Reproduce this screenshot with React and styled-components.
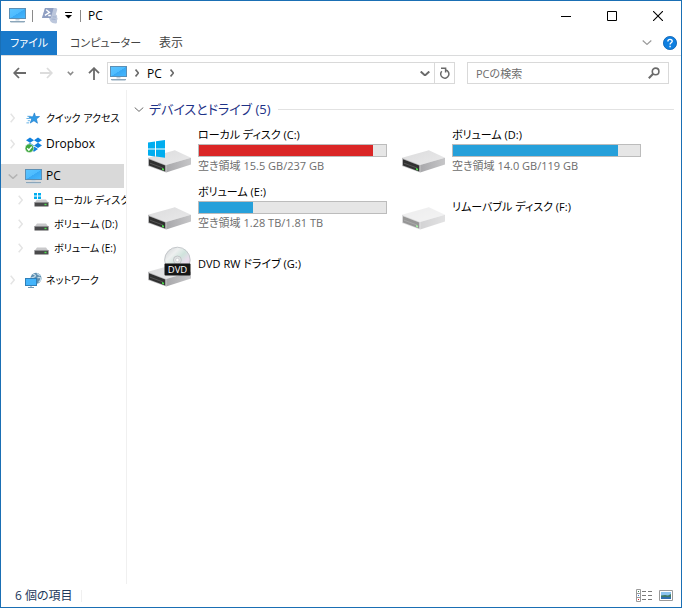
import React from "react";
import styled, { createGlobalStyle, css } from "styled-components";

const GlobalStyle = createGlobalStyle`
  * { box-sizing: border-box; }
  body { margin: 0; background: #fff; }
  body, button, input {
    font-family: "Open Sans", "Noto Sans CJK JP", sans-serif;
    font-size: 12px;
    font-feature-settings: "palt";
  }
  button { border: 0; padding: 0; background: none; color: inherit; }
  svg { display: block; flex: none; }
`;

const Window = styled.div`
  display: flex;
  flex-direction: column;
  height: 100vh;
  min-height: 320px;
  border: 1px solid #1a6fb4;
  background: #fff;
  color: #000;
`;

const TitleBar = styled.header`
  display: flex;
  align-items: center;
  flex: none;
  height: 29px;
  padding-left: 8px;
`;

const Separator = styled.span`
  flex: none;
  width: 1px;
  height: 12px;
  margin: 0 ${(p) => p.$after}px 0 ${(p) => p.$before}px;
  background: #8a8a8a;
`;

const Title = styled.h1`
  flex: 1;
  margin: 0;
  font-size: 12px;
  font-weight: 400;
  line-height: 16px;
`;

const CaptionButton = styled.button`
  display: flex;
  align-items: center;
  justify-content: center;
  width: 46px;
  height: 28px;
`;

const QuickButton = styled.button`
  display: flex;
  align-items: center;
  justify-content: center;
  width: ${(p) => p.$width || 16}px;
  height: 20px;
`;

const Ribbon = styled.nav`
  display: flex;
  align-items: center;
  flex: none;
  height: 26px;
  padding-right: 4px;
  border-bottom: 1px solid #dadbdc;
`;

const RibbonTab = styled.button`
  height: 24px;
  padding: 0 9px;
  font-size: ${(p) => (p.$kana ? 11 : 12)}px;
  line-height: 24px;
  color: #444;
  white-space: nowrap;
  ${(p) => p.$primary && css`
    width: 56px;
    margin-right: 4px;
    background: #1979ca;
    color: #fff;
  `}
`;

const RibbonTools = styled.div`
  display: flex;
  align-items: center;
  gap: 11px;
  margin-left: auto;
`;

const ToolBar = styled.div`
  display: flex;
  align-items: center;
  flex: none;
  height: 34px;
  padding: 0 12px;
`;

const NavButtons = styled.div`
  display: flex;
  align-items: center;
  gap: 14px;
  margin-right: 7px;
`;

const AddressBox = styled.div`
  display: flex;
  align-items: center;
  flex: 1 1 348px;
  height: 22px;
  padding-left: 2px;
  border: 1px solid #d9d9d9;
`;

const CrumbArrow = styled.button`
  margin: 0 8px;
`;

const Crumb = styled.span`
  margin-right: 8px;
`;

const AddressEnd = styled.div`
  display: flex;
  align-items: center;
  align-self: stretch;
  margin-left: auto;
`;

const RefreshButton = styled.button`
  display: flex;
  align-items: center;
  justify-content: center;
  align-self: stretch;
  width: 20px;
  margin-left: 4px;
  border-left: 1px solid #d9d9d9;
`;

const SearchBox = styled.label`
  display: flex;
  align-items: center;
  flex: 0 1 202px;
  min-width: 80px;
  height: 22px;
  margin-left: 12px;
  padding: 0 8px;
  border: 1px solid #d9d9d9;
`;

const SearchInput = styled.input`
  flex: 1;
  min-width: 0;
  padding: 0;
  border: 0;
  outline: 0;
  background: transparent;
  font-size: 11px;
  &::placeholder { color: #6d6d6d; opacity: 1; }
`;

const Body = styled.div`
  display: flex;
  flex: 1;
  min-height: 0;
`;

const SideBar = styled.nav`
  flex: none;
  width: 126px;
  padding: 16px 2px 0 0;
  border-right: 1px solid #f0f0f0;
  overflow: hidden;
`;

const TreeGroup = styled.ul`
  margin: 0 0 ${(p) => p.$gap}px;
  padding: 0;
  list-style: none;
`;

const TreeItem = styled.li`
  display: flex;
  align-items: center;
  height: 24px;
  padding-left: ${(p) => (p.$nested ? 17 : 9)}px;
  background: ${(p) => (p.$selected ? "#d9d9d9" : "transparent")};
`;

const TreeArrow = styled.span`
  display: flex;
  justify-content: center;
  flex: none;
  width: 5px;
`;

const TreeIcon = styled.span`
  display: flex;
  justify-content: center;
  flex: none;
  width: 18px;
  margin: 0 4px 0 9px;
`;

const TreeLabel = styled.a`
  color: #000;
  font-size: ${(p) => (p.$kana ? 10 : 12)}px;
  line-height: 18px;
  text-decoration: none;
  white-space: nowrap;
`;

const Content = styled.main`
  flex: 1;
  min-width: 0;
  padding: 8px 7px 0;
  overflow: hidden;
`;

const GroupHeader = styled.h2`
  display: flex;
  align-items: center;
  gap: 5px;
  margin: 0;
  font-size: 13px;
  font-weight: 400;
  line-height: 22px;
  color: #1e3287;
  white-space: nowrap;
  &::after {
    content: "";
    flex: 1;
    height: 1px;
    margin-left: 2px;
    background: #e2e2e2;
  }
`;

const DriveGrid = styled.ul`
  display: grid;
  grid-template-columns: repeat(auto-fill, 254px);
  grid-auto-rows: 57px;
  margin: 0;
  padding: 1px 0 0 14px;
  list-style: none;
`;

const DriveTile = styled.li`
  display: flex;
  align-items: center;
  gap: 7px;
`;

const DriveInfo = styled.div`
  display: flex;
  flex-direction: column;
  width: 189px;
`;

const DriveName = styled.span`
  font-size: 11px;
  line-height: 15px;
  white-space: nowrap;
`;

const Meter = styled.div`
  height: 13px;
  margin: 2px 0 1px;
  border: 1px solid #bcbcbc;
  background: #e6e6e6;
`;

const MeterFill = styled.div`
  height: 100%;
  background: ${(p) => (p.$full ? "#da2626" : "#26a0da")};
`;

const FreeSpace = styled.span`
  font-size: 11px;
  line-height: 15px;
  color: #6d6d6d;
  white-space: nowrap;
`;

const StatusBar = styled.footer`
  display: flex;
  align-items: center;
  flex: none;
  height: 23px;
  padding: 0 8px 0 14px;
  color: #1e395b;
`;

const StatusText = styled.span`
  padding-right: 8px;
  border-right: 1px solid #f0f0f0;
  line-height: 12px;
`;

const ViewButtons = styled.div`
  display: flex;
  align-items: center;
  gap: 7px;
  margin-left: auto;
`;

const ViewButton = styled.button`
  display: block;
`;

function Chevron({ dir = "right", color = "#6a6a6a", size = 5, stroke = 1.5 }) {
  const right = dir === "right";
  return (
    <svg width={right ? size : size * 2} height={right ? size * 2 : size} viewBox={right ? "0 0 5 10" : "0 0 10 5"} aria-hidden="true">
      <path d={right ? "M.7.7 4.3 5 .7 9.3" : "M.7.5 5 4.4 9.3.5"} fill="none" stroke={color} strokeWidth={stroke} />
    </svg>
  );
}

function PcIcon({ size = 17 }) {
  return (
    <svg width={size} height={size} viewBox="0 0 17 17" aria-hidden="true">
      <defs>
        <linearGradient id="screen" x1="0" y1="0" x2="1" y2="1">
          <stop offset="0" stopColor="#5cc4ff" />
          <stop offset=".5" stopColor="#4dbcff" />
          <stop offset=".52" stopColor="#38a9f4" />
          <stop offset="1" stopColor="#47b8ff" />
        </linearGradient>
      </defs>
      <rect x=".5" y="1.5" width="16" height="10" fill="url(#screen)" stroke="#5b8fb5" />
      <path d="M6.5 12h4v1.5h-4z" fill="#c5d3de" />
      <path d="M1 14.5h15" stroke="#8ba6ba" />
      <path d="M1.5 15.5h14" stroke="#c9d5de" />
    </svg>
  );
}

function ScriptIcon() {
  return (
    <svg width="16" height="17" viewBox="0 0 16 17" aria-hidden="true">
      <path d="M3 1h10.5c1.6 0 2 1 1.6 2.2l-1.3 4.3c1.4.6 1.6 1.6 1.2 2.8.8.8.7 2 0 2.8v1.8c0 1-.7 1.6-1.6 1.6-2 0-3.8-.8-5-2.2L6.9 11H0Z" fill="#bcc7dc" />
      <path d="M3 1h8.6L8.8 11H0Z" fill="#8f9fc2" />
      <path d="m4.2 2.8 3.3 2.6-4.6 3M6.2 8.5h2.6" fill="none" stroke="#fff" strokeWidth="1.3" />
      <path d="m9.5 12 4 .4M10.5 9.8l3.6.3" stroke="#9babca" strokeWidth=".8" />
    </svg>
  );
}

function WinLogo() {
  return (
    <path d="m0 2.4 7-1v7H0ZM8 1.2 17 0v8.4H8ZM0 9.4h7v7l-7-1ZM8 9.4h9v8.4l-9-1.2Z" fill="#00adef" />
  );
}

function DriveShape() {
  return (
    <g>
      <path d="M0 17.8 26 10.4c.6-.1 1-.1 1.4.1L43 17.8 18.4 25Z" fill="url(#top)" />
      <path d="M18.2 25 43 17.8v6.8L18.2 32.4Z" fill="url(#side)" />
      <path d="m0 17.8 18.2 7.2v7.4L0 26Z" fill="#b9b9bb" />
      <path d="m1 19.2 16.2 6.2v6L1 25.4Z" fill="#303030" />
      <path d="m2 23.2 13 4.8" stroke="#555" strokeWidth="1" />
      <path d="m14 28 2 .7v1.8l-2-.7Z" fill="#4be34b" />
    </g>
  );
}

function DriveIcon({ kind }) {
  return (
    <svg width="43" height="48" viewBox="0 -14 43 48" opacity={kind === "removable" ? 0.5 : 1} aria-hidden="true">
      <defs>
        <linearGradient id="top" x1="0" y1="0" x2="1" y2="1">
          <stop offset="0" stopColor="#dcdcdd" />
          <stop offset="1" stopColor="#e9e9ea" />
        </linearGradient>
        <linearGradient id="side" x1="0" y1="0" x2="1" y2="0">
          <stop offset="0" stopColor="#a8a8ab" />
          <stop offset="1" stopColor="#c6c6c8" />
        </linearGradient>
        <linearGradient id="disc" x1="0" y1="0" x2="1" y2="1">
          <stop offset="0" stopColor="#c9cdd0" />
          <stop offset=".3" stopColor="#eef0f0" />
          <stop offset=".5" stopColor="#cfe3dc" />
          <stop offset=".7" stopColor="#eadcec" />
          <stop offset="1" stopColor="#c5c9cc" />
        </linearGradient>
      </defs>
      <DriveShape />
      {kind === "system" && <WinLogo />}
      {kind === "dvd" && (
        <g>
          <circle cx="29.4" cy="6" r="12.8" fill="url(#disc)" stroke="#b9bdc0" strokeWidth=".8" />
          <circle cx="29.4" cy="6" r="4" fill="#dfe2e3" stroke="#b4b8ba" strokeWidth=".7" />
          <circle cx="29.4" cy="6" r="1.7" fill="#fff" stroke="#b4b8ba" strokeWidth=".5" />
          <rect x="16.5" y="9.5" width="26" height="12" rx="1" fill="#161616" />
          <text x="29.5" y="19" fill="#fff" fontSize="9.5" textAnchor="middle">DVD</text>
        </g>
      )}
    </svg>
  );
}

function SmallDriveIcon({ system }) {
  return (
    <svg width="15" height="16" viewBox="0 0 15 16" aria-hidden="true">
      <path d="M3 7.5h9l2.5 3.3H.5Z" fill="#c9c9cb" />
      <path d="M.5 10.5h14v4H.5Z" fill="#4a4a4c" />
      <path d="M.5 10.5h14" stroke="#8d8d90" />
      <path d="M10.5 12.5h2" stroke="#4be34b" strokeWidth="1.4" />
      {system && (
        <g>
          <path d="M0 0h7v7.5H0z" fill="#fff" />
          <path d="M0 1h3v2.5H0zM4 1h3v2.5H4zM0 4.5h3V7H0zM4 4.5h3V7H4z" fill="#00adef" />
        </g>
      )}
    </svg>
  );
}

function StarIcon() {
  return (
    <svg width="14" height="13" viewBox="0 0 16 14" aria-hidden="true">
      <path d="m9.6.6 1.3 4.1 4.6.1-3.6 2.7 1.2 4.9-4-2.8-4.3 2.6 1.7-4.5L3 5h4.9Z" fill="#2f9be6" stroke="#1b78c8" strokeWidth=".7" />
      <path d="M1.5 4.5h4M.5 7h4.5M2 9.5h2.5M.5 12h3" stroke="#3f9fe0" strokeWidth=".9" />
    </svg>
  );
}

function DropboxIcon() {
  return (
    <svg width="17" height="17" viewBox="0 0 17 17" aria-hidden="true">
      <path d="m5 1.5 4 2.7-4 2.6-4-2.6ZM13 1.5l4 2.7-4 2.6-4-2.6ZM5 6.8l4 2.6-4 2.7-4-2.7ZM13 6.8l4 2.6-4 2.7-4-2.7ZM9 10.5l4 2.6-4 2.6-4-2.6Z" fill="#1081de" />
      <circle cx="4.4" cy="12.2" r="4.3" fill="#3fa83f" stroke="#e8f5e8" strokeWidth=".6" />
      <path d="m2.2 12.2 1.7 1.9 2.9-3.5" fill="none" stroke="#fff" strokeWidth="1.4" />
    </svg>
  );
}

function NetworkIcon() {
  return (
    <svg width="17" height="17" viewBox="0 0 17 17" aria-hidden="true">
      <circle cx="11" cy="6.3" r="5.5" fill="#5f8fb0" />
      <path d="M8 2.2c2 .5 3 1.3 2 2.3s-2.7.8-3.7 1.7M12 1.4c1 1.5 2.6 1.7 3.6 2M12.5 6c1-.8 2.5-.6 3.5.4-.2 2-1 3-2.4 4.2" fill="none" stroke="#c4dbe8" strokeWidth="1.3" />
      <rect x=".5" y="6.5" width="11" height="7" fill="#43b4fb" stroke="#2f7fb8" />
      <path d="M3 15.5h6M6 14v1.5" stroke="#6f98b5" />
    </svg>
  );
}

const drives = [
  { name: "ローカル ディスク (C:)", kind: "system", used: 93, full: true, free: "空き領域 15.5 GB/237 GB" },
  { name: "ボリューム (D:)", used: 88, free: "空き領域 14.0 GB/119 GB" },
  { name: "ボリューム (E:)", used: 29, free: "空き領域 1.28 TB/1.81 TB" },
  { name: "リムーバブル ディスク (F:)", kind: "removable" },
  { name: "DVD RW ドライブ (G:)", kind: "dvd" },
];

const tree = [
  { gap: 2, items: [{ label: "クイック アクセス", icon: <StarIcon />, kana: true }] },
  { gap: 8, items: [{ label: "Dropbox", icon: <DropboxIcon /> }] },
  {
    gap: 8,
    items: [
      { label: "PC", icon: <PcIcon />, selected: true },
      { label: "ローカル ディスク", icon: <SmallDriveIcon system />, nested: true, kana: true },
      { label: "ボリューム (D:)", icon: <SmallDriveIcon />, nested: true, kana: true },
      { label: "ボリューム (E:)", icon: <SmallDriveIcon />, nested: true, kana: true },
    ],
  },
  { gap: 0, items: [{ label: "ネットワーク", icon: <NetworkIcon />, kana: true }] },
];

export default function App() {
  return (
    <>
      <GlobalStyle />
      <Window>
        <TitleBar>
          <PcIcon />
          <Separator $before={6} $after={9} />
          <QuickButton $width={16} aria-label="PowerShell"><ScriptIcon /></QuickButton>
          <QuickButton $width={21} aria-label="カスタマイズ">
            <svg width="7" height="7" viewBox="0 0 7 7" aria-hidden="true">
              <path d="M0 .5h7" stroke="#000" />
              <path d="M0 3h7L3.5 6.5Z" fill="#000" />
            </svg>
          </QuickButton>
          <Separator $before={1} $after={7} />
          <Title>PC</Title>
          <CaptionButton aria-label="最小化">
            <svg width="10" height="10" viewBox="0 0 10 10"><path d="M0 5.5h10" stroke="#000" /></svg>
          </CaptionButton>
          <CaptionButton aria-label="最大化">
            <svg width="10" height="10" viewBox="0 0 10 10"><path d="M.5.5h9v9h-9Z" fill="none" stroke="#000" /></svg>
          </CaptionButton>
          <CaptionButton aria-label="閉じる">
            <svg width="10" height="10" viewBox="0 0 10 10"><path d="m0 0 10 10M10 0 0 10" stroke="#000" strokeWidth="1.1" /></svg>
          </CaptionButton>
        </TitleBar>

        <Ribbon>
          <RibbonTab $primary $kana>ファイル</RibbonTab>
          <RibbonTab $kana>コンピューター</RibbonTab>
          <RibbonTab>表示</RibbonTab>
          <RibbonTools>
            <QuickButton $width={10} aria-label="リボンの展開"><Chevron dir="down" color="#9a9a9a" stroke={1.2} /></QuickButton>
            <QuickButton $width={14} aria-label="ヘルプ">
              <svg width="14" height="14" viewBox="0 0 14 14" aria-hidden="true">
                <circle cx="7" cy="7" r="6.6" fill="#0f7fe0" stroke="#0a5fb0" strokeWidth=".8" />
                <path d="M4.9 5.4c0-2.6 4.3-2.6 4.3-.2 0 1.6-2.1 1.6-2.1 3.3M7.1 9.7v1.5" fill="none" stroke="#fff" strokeWidth="1.4" />
              </svg>
            </QuickButton>
          </RibbonTools>
        </Ribbon>

        <ToolBar>
          <NavButtons>
            <QuickButton $width={13} aria-label="戻る">
              <svg width="13" height="12" viewBox="0 0 13 12"><path d="M6 1 1.2 6 6 11M1.5 6H13" fill="none" stroke="#6a6a6a" strokeWidth="1.8" /></svg>
            </QuickButton>
            <QuickButton $width={13} aria-label="進む">
              <svg width="13" height="12" viewBox="0 0 13 12"><path d="M7 1l4.8 5L7 11M11.5 6H0" fill="none" stroke="#dcdcdc" strokeWidth="1.8" /></svg>
            </QuickButton>
            <QuickButton $width={7} aria-label="履歴">
              <svg width="7" height="5" viewBox="0 0 7 5"><path d="M.8.8 3.5 3.5 6.2.8" fill="none" stroke="#8a8a8a" strokeWidth="1.6" /></svg>
            </QuickButton>
            <QuickButton $width={12} aria-label="上へ">
              <svg width="12" height="13" viewBox="0 0 12 13"><path d="M1 6.2 6 1.2l5 5M6 1.5V13" fill="none" stroke="#6a6a6a" strokeWidth="1.8" /></svg>
            </QuickButton>
          </NavButtons>
          <AddressBox>
            <PcIcon />
            <CrumbArrow aria-label="場所の一覧"><Chevron size={4} stroke={2} /></CrumbArrow>
            <Crumb>PC</Crumb>
            <Chevron size={4} stroke={2} />
            <AddressEnd>
              <QuickButton $width={10} aria-label="以前の場所"><Chevron dir="down" stroke={2} /></QuickButton>
              <RefreshButton aria-label="最新の情報に更新">
                <svg width="10" height="12" viewBox="0 0 10 12"><path d="M1.8 4.2A4.1 4.1 0 1 0 5.6 3M1 1.2h4.6v4.4" fill="none" stroke="#6a6a6a" strokeWidth="1.5" /></svg>
              </RefreshButton>
            </AddressEnd>
          </AddressBox>
          <SearchBox>
            <SearchInput type="text" placeholder="PCの検索" aria-label="PCの検索" />
            <svg width="12" height="12" viewBox="0 0 12 12" aria-hidden="true">
              <circle cx="7.6" cy="4.4" r="3.3" fill="none" stroke="#6a6a6a" strokeWidth="1.6" />
              <path d="M5.2 6.8.8 11.2" stroke="#6a6a6a" strokeWidth="2" />
            </svg>
          </SearchBox>
        </ToolBar>

        <Body>
          <SideBar aria-label="ナビゲーション">
            {tree.map((group, i) => (
              <TreeGroup key={i} $gap={group.gap}>
                {group.items.map((item) => (
                  <TreeItem key={item.label} $nested={item.nested} $selected={item.selected}>
                    <TreeArrow>
                      {item.selected
                        ? <Chevron dir="down" color="#b4b4b4" />
                        : <Chevron color="#e4e4e4" />}
                    </TreeArrow>
                    <TreeIcon>{item.icon}</TreeIcon>
                    <TreeLabel href="#" $kana={item.kana}>{item.label}</TreeLabel>
                  </TreeItem>
                ))}
              </TreeGroup>
            ))}
          </SideBar>

          <Content>
            <GroupHeader>
              <Chevron dir="down" color="#6a6a6a" stroke={1} />
              デバイスとドライブ (5)
            </GroupHeader>
            <DriveGrid>
              {drives.map((drive) => (
                <DriveTile key={drive.name}>
                  <DriveIcon kind={drive.kind} />
                  <DriveInfo>
                    <DriveName>{drive.name}</DriveName>
                    {drive.free && (
                      <>
                        <Meter role="meter" aria-label={drive.name} aria-valuenow={drive.used} aria-valuemin={0} aria-valuemax={100}>
                          <MeterFill $full={drive.full} style={{ width: `${drive.used}%` }} />
                        </Meter>
                        <FreeSpace>{drive.free}</FreeSpace>
                      </>
                    )}
                  </DriveInfo>
                </DriveTile>
              ))}
            </DriveGrid>
          </Content>
        </Body>

        <StatusBar>
          <StatusText>6 個の項目</StatusText>
          <ViewButtons>
            <ViewButton aria-label="詳細">
              <svg width="16" height="13" viewBox="0 0 16 13" aria-hidden="true">
                <path d="M.5.5h4v12h-4ZM.5 4.5h4M.5 8.5h4" fill="#fff" stroke="#9a9a9a" />
                <path d="M2 2.5h1" stroke="#3a8a5a" /><path d="M2 6.5h1" stroke="#2a7ae0" /><path d="M2 10.5h1" stroke="#e02020" />
                <path d="M6 2.5h4M12 2.5h4M6 6.5h4M12 6.5h4M6 10.5h4M12 10.5h4" stroke="#7a7a7a" />
              </svg>
            </ViewButton>
            <ViewButton aria-label="大アイコン">
              <svg width="14" height="11" viewBox="0 0 14 11" aria-hidden="true">
                <path d="M.5.5h13v10H.5Z" fill="#fff" stroke="#9a9a9a" />
                <path d="M2 2h10v4H2Z" fill="#8cc4ef" />
                <path d="M2 5.5 6 5l3 .5L12 4v3H2Z" fill="#3f7a66" />
                <path d="M2 7h10v2H2Z" fill="#2f6fb0" />
              </svg>
            </ViewButton>
          </ViewButtons>
        </StatusBar>
      </Window>
    </>
  );
}
